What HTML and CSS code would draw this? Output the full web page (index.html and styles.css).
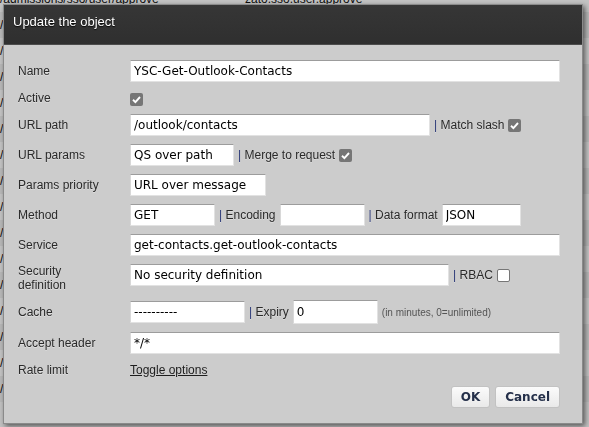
FILE: index.html
```html
<!DOCTYPE html>
<html lang="en">
<head>
<meta charset="utf-8">
<title>Update the object</title>
<link rel="stylesheet" href="styles.css">
</head>
<body>
<div class="backdrop">
  <div class="bg-row"><span class="c1">/admissions/sso/user/approve</span><span class="c2">zato.sso.user.approve</span></div>
  <div class="bg-row alt"><span class="c1">/admissions/sso/user/create</span><span class="c2">zato.sso.user.create</span></div>
  <div class="bg-row"><span class="c1">/admissions/sso/user/delete</span><span class="c2">zato.sso.user.delete</span></div>
  <div class="bg-row alt"><span class="c1">/admissions/sso/user/get</span><span class="c2">zato.sso.user.get</span></div>
  <div class="bg-row"><span class="c1">/admissions/sso/user/login</span><span class="c2">zato.sso.user.login</span></div>
  <div class="bg-row alt"><span class="c1">/admissions/sso/user/logout</span><span class="c2">zato.sso.user.logout</span></div>
  <div class="bg-row"><span class="c1">/admissions/sso/user/search</span><span class="c2">zato.sso.user.search</span></div>
  <div class="bg-row alt"><span class="c1">/admissions/sso/user/update</span><span class="c2">zato.sso.user.update</span></div>
  <div class="bg-row"><span class="c1">/admissions/sso/session</span><span class="c2">zato.sso.session</span></div>
  <div class="bg-row alt"><span class="c1">/admissions/sso/password</span><span class="c2">zato.sso.password</span></div>
  <div class="bg-row"><span class="c1">/admissions/sso/signup</span><span class="c2">zato.sso.signup</span></div>
  <div class="bg-row alt"><span class="c1">/admissions/sso/attr</span><span class="c2">zato.sso.attr</span></div>
  <div class="bg-row"><span class="c1">/admissions/sso/linked</span><span class="c2">zato.sso.linked</span></div>
  <div class="bg-row alt"><span class="c1">/admissions/sso/flow</span><span class="c2">zato.sso.flow</span></div>
  <div class="bg-row"><span class="c1">/admissions/sso/totp</span><span class="c2">zato.sso.totp</span></div>
  <div class="bg-row alt"><span class="c1">/admissions/sso/lock</span><span class="c2">zato.sso.lock</span></div>
</div>
<div class="overlay"></div>

<div class="dialog">
  <div class="dlg-title">Update the object</div>
  <form class="dlg-body">
    <div class="row">
      <label class="lbl">Name</label>
      <div class="ctl"><input class="inp full" type="text" value="YSC-Get-Outlook-Contacts"></div>
    </div>
    <div class="row row-short">
      <label class="lbl">Active</label>
      <div class="ctl"><span class="cb on cb-active"><svg viewBox="0 0 13 13" width="13" height="13"><path d="M3 6.8 L5.4 9.1 L10 4" fill="none" stroke="#fff" stroke-width="1.9"/></svg></span></div>
    </div>
    <div class="row">
      <label class="lbl">URL path</label>
      <div class="ctl">
        <input class="inp w-path" type="text" value="/outlook/contacts">
        <span class="sub"><span class="pipe">|</span> Match slash</span>
        <span class="cb on"><svg viewBox="0 0 13 13" width="13" height="13"><path d="M3 6.8 L5.4 9.1 L10 4" fill="none" stroke="#fff" stroke-width="1.9"/></svg></span>
      </div>
    </div>
    <div class="row">
      <label class="lbl">URL params</label>
      <div class="ctl">
        <input class="inp w-params" type="text" value="QS over path">
        <span class="sub"><span class="pipe">|</span> Merge to request</span>
        <span class="cb on"><svg viewBox="0 0 13 13" width="13" height="13"><path d="M3 6.8 L5.4 9.1 L10 4" fill="none" stroke="#fff" stroke-width="1.9"/></svg></span>
      </div>
    </div>
    <div class="row">
      <label class="lbl">Params priority</label>
      <div class="ctl"><input class="inp w-prio" type="text" value="URL over message"></div>
    </div>
    <div class="row">
      <label class="lbl">Method</label>
      <div class="ctl">
        <input class="inp w-small" type="text" value="GET">
        <span class="sub"><span class="pipe">|</span> Encoding</span>
        <input class="inp w-small" type="text" value="">
        <span class="sub"><span class="pipe">|</span> Data format</span>
        <input class="inp w-json" type="text" value="JSON">
      </div>
    </div>
    <div class="row">
      <label class="lbl">Service</label>
      <div class="ctl"><input class="inp full" type="text" value="get-contacts.get-outlook-contacts"></div>
    </div>
    <div class="row row-top">
      <label class="lbl lbl-wrap">Security definition</label>
      <div class="ctl">
        <input class="inp w-sec" type="text" value="No security definition">
        <span class="sub"><span class="pipe">|</span> RBAC</span>
        <span class="cb off"></span>
      </div>
    </div>
    <div class="row">
      <label class="lbl">Cache</label>
      <div class="ctl">
        <input class="inp w-cache" type="text" value="----------">
        <span class="sub"><span class="pipe">|</span> Expiry</span>
        <input class="inp w-small tall" type="text" value="0">
        <span class="hint">(in minutes, 0=unlimited)</span>
      </div>
    </div>
    <div class="row">
      <label class="lbl">Accept header</label>
      <div class="ctl"><input class="inp full" type="text" value="*/*"></div>
    </div>
    <div class="row row-short">
      <label class="lbl">Rate limit</label>
      <div class="ctl"><a class="toggle" href="#">Toggle options</a></div>
    </div>
    <div class="buttons">
      <button class="btn" type="button">OK</button>
      <button class="btn" type="button">Cancel</button>
    </div>
  </form>
</div>
</body>
</html>
```

FILE: styles.css
```css
html, body {
  margin: 0;
  padding: 0;
  overflow: hidden;
}

body {
  width: 589px;
  height: 427px;
  background: #f2f2f2;
  font-family: "Liberation Sans", Arial, sans-serif;
  font-size: 12px;
  color: #222;
}

/* page behind the modal */
.backdrop {
  margin-top: -14px;
}

.bg-row {
  display: flex;
  height: 18px;
  line-height: 18px;
  padding: 4px 0;
  background: #f4f4f4;
  color: #111;
}

.bg-row.alt {
  background: #e6e6e6;
}

.bg-row .c1 {
  width: 245px;
}

.bg-row .c2 {
  flex: 1;
}

.overlay {
  position: fixed;
  inset: 0;
  background: rgba(0, 0, 0, 0.2);
}

/* dialog window */
.dialog {
  position: absolute;
  left: 3px;
  top: 4px;
  width: 580px;
  box-sizing: border-box;
  background: #cccccc;
  border: 1px solid #8a8a8a;
  box-shadow: 2px 2px 5px rgba(0, 0, 0, 0.55);
}

.dlg-title {
  height: 40px;
  box-sizing: border-box;
  padding: 9px 10px 0 9px;
  background: linear-gradient(#363636, #2f2f2f);
  border-bottom: 1px solid #4c4c4c;
  color: #fff;
  font-size: 13px;
  line-height: 15px;
  text-shadow: 0 1px 1px rgba(0, 0, 0, 0.9);
}

.dlg-body {
  display: flex;
  flex-direction: column;
  gap: 8px;
  margin: 0;
  padding: 15px 22px 15px 14px;
}

.row {
  display: flex;
  align-items: center;
  min-height: 22px;
}

.row-short {
  min-height: 16px;
  height: 16px;
}

.row-top {
  align-items: flex-start;
}

.lbl {
  flex: 0 0 112px;
  box-sizing: border-box;
  padding-right: 14px;
  color: #2a2a2a;
  font-size: 12px;
  text-shadow: 0 1px 0 rgba(255, 255, 255, 0.35);
}

.lbl-wrap {
  line-height: 14px;
  padding-right: 30px;
}

.ctl {
  flex: 1;
  display: flex;
  align-items: center;
  gap: 4px;
  min-width: 0;
}

.inp {
  box-sizing: border-box;
  height: 22px;
  margin: 0;
  padding: 0 3px;
  border: 1px solid #e2e2e2;
  border-top-color: #9c9c9c;
  border-left-color: #d8d8d8;
  border-radius: 0;
  background: #fff;
  color: #000;
  font-family: "DejaVu Sans", Verdana, sans-serif;
  font-size: 12px;
  outline: none;
}

.full { width: 100%; }
.w-path { width: 300px; }
.w-params { width: 104px; }
.w-prio { width: 136px; }
.w-small { width: 85px; }
.w-json { width: 79px; }
.w-sec { width: 319px; }
.w-cache { width: 115px; }
.tall { height: 24px; }

.sub {
  color: #2a2a2a;
  font-size: 12px;
  white-space: nowrap;
  text-shadow: 0 1px 0 rgba(255, 255, 255, 0.3);
}

.pipe {
  color: #2c3a78;
}

.hint {
  color: #555;
  font-size: 10px;
  white-space: nowrap;
}

.cb {
  display: inline-flex;
  width: 13px;
  height: 13px;
  box-sizing: border-box;
  border-radius: 2px;
  flex: 0 0 auto;
}

.cb.on {
  background: #767676;
}

.cb.off {
  background: #fff;
  border: 1px solid #767676;
}

.cb-active {
  margin-top: 3px;
}

.toggle {
  color: #1e1e1e;
  text-decoration: underline;
  font-size: 12px;
}

.buttons {
  display: flex;
  justify-content: flex-end;
  gap: 5px;
}

.btn {
  height: 22px;
  margin: 0;
  padding: 0 9px;
  border: 1px solid #c2c2c2;
  border-radius: 3px;
  background: linear-gradient(#fbfbfb, #e9e9e9);
  color: #25304a;
  font-family: "DejaVu Sans", Verdana, sans-serif;
  font-size: 12px;
  font-weight: bold;
  cursor: pointer;
}
```
